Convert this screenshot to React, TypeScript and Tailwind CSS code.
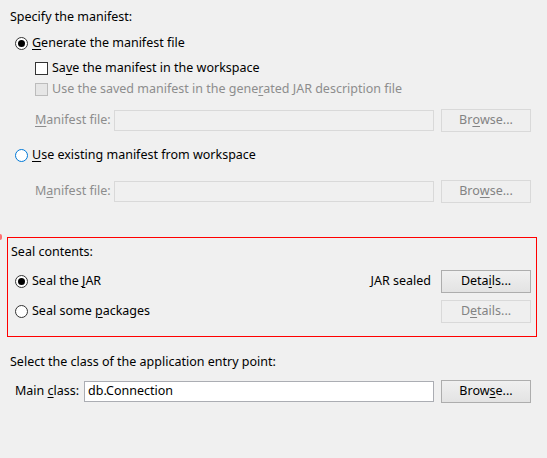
import type React from "react"

const font = { fontFamily: '"Noto Sans", "Liberation Sans", sans-serif' }

// letter with a keyboard mnemonic underline
function K({ children }: { children: React.ReactNode }) {
  return <span className="underline underline-offset-[2px] decoration-1">{children}</span>
}

function Radio({ checked, focus }: { checked?: boolean; focus?: boolean }) {
  return (
    <span
      className={`flex h-[13px] w-[13px] shrink-0 items-center justify-center rounded-full border bg-white ${
        focus ? "border-[#0078d7]" : "border-[#333333]"
      }`}
    >
      {checked && <span className="h-[7px] w-[7px] rounded-full bg-[#000000]" />}
    </span>
  )
}

function Check({ disabled }: { disabled?: boolean }) {
  return (
    <span
      className={`h-[13px] w-[13px] shrink-0 border ${
        disabled ? "border-[#bcbcbc] bg-[#e6e6e6]" : "border-[#333333] bg-white"
      }`}
    />
  )
}

function Button({ children, disabled }: { children: React.ReactNode; disabled?: boolean }) {
  return (
    <div
      className={`flex h-[23px] w-[90px] shrink-0 items-center justify-center border ${
        disabled
          ? "border-[#d9d9d9] bg-[#efefef] text-[#838383]"
          : "border-[#adadad] bg-gradient-to-b from-[#f0f0f0] to-[#e3e3e3] text-black"
      }`}
    >
      {children}
    </div>
  )
}

function Field({ value, disabled }: { value?: string; disabled?: boolean }) {
  return (
    <div
      className={`flex h-[21px] flex-1 items-center border px-[3px] ${
        disabled ? "border-[#d9d9d9] bg-[#f0f0f0]" : "border-[#abadb3] bg-white text-black"
      }`}
    >
      {value}
    </div>
  )
}

function ManifestRow({ mnemonic }: { mnemonic: "M" | "a" }) {
  return (
    <div className="flex h-[23px] items-center pl-[35px] pr-[16px]">
      <span className="w-[79px] text-[#8d8d8d]">
        {mnemonic === "M" ? (
          <>
            <K>M</K>anifest file:
          </>
        ) : (
          <>
            M<K>a</K>nifest file:
          </>
        )}
      </span>
      <Field disabled />
      <div className="w-[7px]" />
      <Button disabled>
        {mnemonic === "M" ? (
          <>
            Br<K>o</K>wse...
          </>
        ) : (
          <>
            Bro<K>w</K>se...
          </>
        )}
      </Button>
    </div>
  )
}

export default function App() {
  return (
    <div className="relative h-[458px] w-[547px] bg-[#f0f0f0] text-[12.5px] text-black" style={font}>
      <div className="flex flex-col pt-[7px]">
        <div className="flex h-[20px] items-center pl-[10px]">Specify the manifest:</div>

        <div className="mt-[6px] flex h-[20px] items-center gap-[4px] pl-[15px]">
          <Radio checked />
          <span>
            <K>G</K>enerate the manifest file
          </span>
        </div>

        <div className="mt-[5px] flex h-[21px] items-center gap-[4px] pl-[35px]">
          <Check />
          <span>
            Sa<K>v</K>e the manifest in the workspace
          </span>
        </div>

        <div className="flex h-[21px] items-center gap-[4px] pl-[35px] text-[#8d8d8d]">
          <Check disabled />
          <span>
            Use the saved manifest in the gene<K>r</K>ated JAR description file
          </span>
        </div>

        <div className="mt-[9px]">
          <ManifestRow mnemonic="M" />
        </div>

        <div className="mt-[13px] flex h-[20px] items-center gap-[4px] pl-[15px]">
          <Radio focus />
          <span>
            <K>U</K>se existing manifest from workspace
          </span>
        </div>

        <div className="mt-[15px]">
          <ManifestRow mnemonic="a" />
        </div>

        {/* sealing options */}
        <div className="ml-[7px] mr-[10px] mt-[34px] flex h-[100px] flex-col border border-[#ff0000] pl-[3px] pr-[5px]">
          <div className="mt-[4px] flex h-[20px] items-center">Seal contents:</div>
          <div className="mt-[8px] flex h-[23px] items-center">
            <div className="flex flex-1 items-center gap-[4px] pl-[4px]">
              <Radio checked />
              <span>
                Seal the <K>J</K>AR
              </span>
            </div>
            <span className="mr-[10px]">JAR sealed</span>
            <Button>
              Deta<K>i</K>ls...
            </Button>
          </div>
          <div className="mt-[7px] flex h-[23px] items-center">
            <div className="flex flex-1 items-center gap-[4px] pl-[4px]">
              <Radio />
              <span>
                Seal some <K>p</K>ackages
              </span>
            </div>
            <Button disabled>
              D<K>e</K>tails...
            </Button>
          </div>
        </div>

        <div className="mt-[15px] flex h-[20px] items-center pl-[10px]">
          Select the class of the application entry point:
        </div>

        <div className="mt-[8px] flex h-[23px] items-center pl-[15px] pr-[16px]">
          <span className="w-[69px]">
            Main <K>c</K>lass:
          </span>
          <Field value="db.Connection" />
          <div className="w-[7px]" />
          <Button>
            Brow<K>s</K>e...
          </Button>
        </div>
      </div>

      <div className="absolute left-0 top-[234px] h-[6px] w-[2px] rounded-r-full bg-[#ff7070]" />
    </div>
  )
}
